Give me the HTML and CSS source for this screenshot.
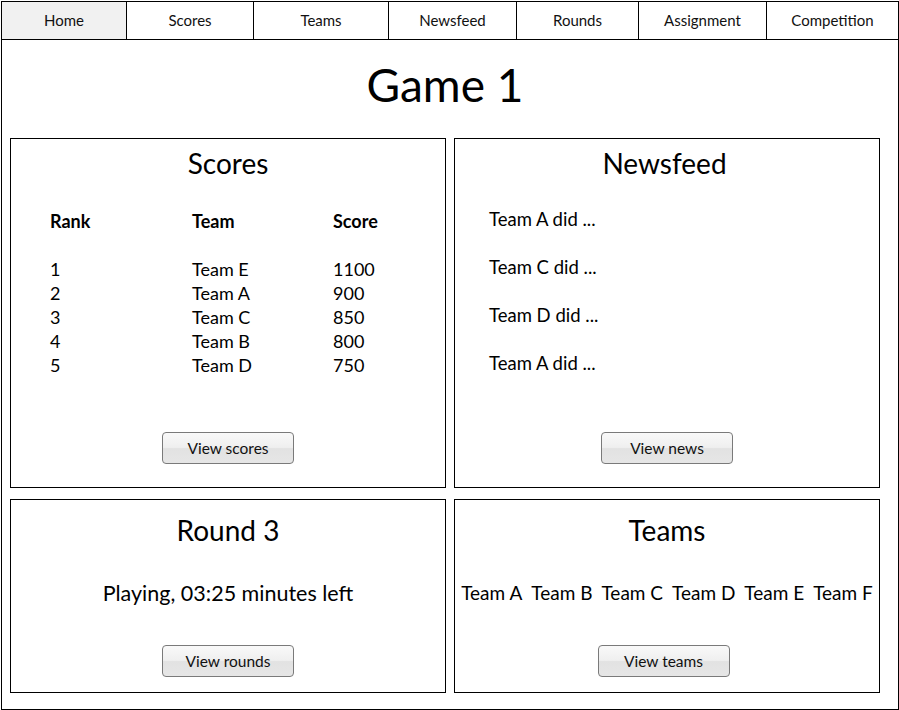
FILE: index.html
```html
<!DOCTYPE html>
<html>
<head>
<meta charset="utf-8">
<title>Game 1</title>
<link rel="stylesheet" href="styles.css">
</head>
<body>
<div class="frame">
  <nav class="nav">
    <a class="nav-item active">Home</a>
    <a class="nav-item">Scores</a>
    <a class="nav-item">Teams</a>
    <a class="nav-item">Newsfeed</a>
    <a class="nav-item">Rounds</a>
    <a class="nav-item">Assignment</a>
    <a class="nav-item">Competition</a>
  </nav>
  <main class="main">
    <h1 class="title">Game 1</h1>
    <div class="grid">
      <section class="panel panel-top">
        <h2 class="panel-title">Scores</h2>
        <div class="score-table">
          <div class="th">Rank</div><div class="th">Team</div><div class="th">Score</div>
          <div class="spacer"></div>
          <div>1</div><div>Team E</div><div>1100</div>
          <div>2</div><div>Team A</div><div>900</div>
          <div>3</div><div>Team C</div><div>850</div>
          <div>4</div><div>Team B</div><div>800</div>
          <div>5</div><div>Team D</div><div>750</div>
        </div>
        <div class="btn-row"><button class="btn">View scores</button></div>
      </section>
      <section class="panel panel-top">
        <h2 class="panel-title title-news">Newsfeed</h2>
        <ul class="news">
          <li>Team A did ...</li>
          <li>Team C did ...</li>
          <li>Team D did ...</li>
          <li>Team A did ...</li>
        </ul>
        <div class="btn-row"><button class="btn">View news</button></div>
      </section>
      <section class="panel panel-bottom">
        <h2 class="panel-title">Round 3</h2>
        <p class="status">Playing, 03:25 minutes left</p>
        <div class="btn-row"><button class="btn">View rounds</button></div>
      </section>
      <section class="panel panel-bottom">
        <h2 class="panel-title">Teams</h2>
        <ul class="teams">
          <li>Team A</li><li>Team B</li><li>Team C</li><li>Team D</li><li>Team E</li><li>Team F</li>
        </ul>
        <div class="btn-row btn-row-teams"><button class="btn">View teams</button></div>
      </section>
    </div>
  </main>
</div>
</body>
</html>
```

FILE: styles.css
```css
* { box-sizing: border-box; }
html, body { margin: 0; padding: 0; background: #fff; }
body {
  padding: 1px 0 0 1px;
  font-family: Lato, "Liberation Sans", sans-serif;
  color: #000;
}
.frame {
  width: 898px;
  height: 709px;
  border: 1px solid #000;
  display: flex;
  flex-direction: column;
}
.nav {
  display: grid;
  grid-template-columns: 124px 126px 134px 127px 121px 127px 131px;
  column-gap: 1px;
  background: #000;
  border-bottom: 1px solid #000;
}
.nav-item {
  height: 37px;
  padding-bottom: 1px;
  display: flex;
  align-items: center;
  justify-content: center;
  background: #fff;
  font-size: 15px;
  color: #111;
}
.nav-item.active { background: #f1f1f1; }
.main {
  padding: 19px 18px 0 8px;
}
.title {
  margin: 0 0 27px 0;
  height: 52px;
  line-height: 52px;
  font-size: 46px;
  font-weight: 400;
  text-align: center;
}
.grid {
  display: grid;
  grid-template-columns: 436px 426px;
  grid-template-rows: 350px 194px;
  column-gap: 8px;
  row-gap: 11px;
}
.panel {
  border: 1px solid #000;
  display: flex;
  flex-direction: column;
}
.panel-top { padding-top: 6px; }
.panel-bottom { padding-top: 12px; }
.panel-title {
  margin: 0;
  height: 36px;
  line-height: 36px;
  font-size: 28px;
  font-weight: 400;
  text-align: center;
}
.title-news { padding-right: 5px; }
.score-table {
  margin-top: 28px;
  padding-left: 39px;
  display: grid;
  grid-template-columns: 142px 141px 100px;
  grid-auto-rows: 24px;
  line-height: 24px;
  font-size: 18px;
}
.score-table .th { font-weight: 700; }
.score-table .spacer { grid-column: 1 / -1; }
.news {
  list-style: none;
  margin: 26px 0 0 0;
  padding: 0 0 0 34px;
  font-size: 18.5px;
}
.news li {
  height: 24px;
  line-height: 24px;
  margin-bottom: 24px;
}
.btn-row {
  margin-top: auto;
  padding-bottom: 23px;
  display: flex;
  justify-content: center;
}
.panel-bottom .btn-row { padding-bottom: 15px; }
.btn-row-teams { padding-right: 7px; }
.btn {
  width: 132px;
  height: 32px;
  border: 1px solid #7a7a7a;
  border-radius: 4px;
  background: linear-gradient(#f9f9f9 0%, #efefef 48%, #e2e2e2 52%, #e6e6e6 100%);
  font-family: inherit;
  font-size: 15.5px;
  color: #111;
  padding: 0;
}
.status {
  margin: 33px 0 0 0;
  line-height: 24px;
  font-size: 21.5px;
  text-align: center;
}
.teams {
  list-style: none;
  margin: 33px 0 0 0;
  padding: 0;
  display: flex;
  justify-content: center;
  gap: 9px;
  line-height: 24px;
  font-size: 19px;
  white-space: nowrap;
}
```
